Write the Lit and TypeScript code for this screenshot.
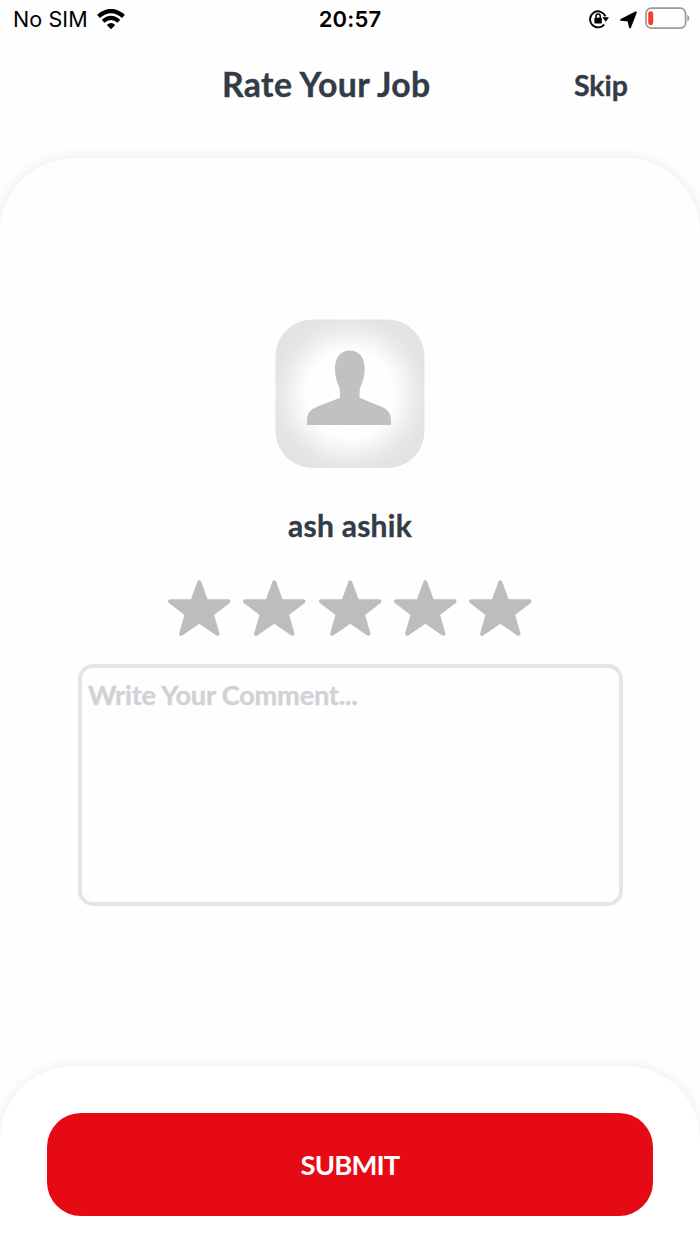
import { LitElement, html, css } from "lit";
import { customElement } from "lit/decorators.js";

@customElement("status-bar")
class StatusBar extends LitElement {
  static styles = css`
    :host { display: block; height: 40px; }
    .bar { display: grid; grid-template-columns: 1fr auto 1fr; align-items: center; height: 39px; padding: 0 10px 0 13px; box-sizing: border-box; font-family: Inter, "Liberation Sans", sans-serif; color: #000; }
    .left, .right { display: flex; align-items: center; }
    .right { justify-content: flex-end; }
    .carrier { font-size: 21.5px; line-height: 39px; width: 75px; white-space: nowrap; font-weight: 400; letter-spacing: 0.1px; }
    .time { font-size: 22px; line-height: 39px; font-weight: 600; letter-spacing: 0.2px; margin-right: 3px; }
    .wifi { margin: 0 0 1px 9px; }
    .lock { margin-bottom: 1px; }
    .arrow { margin: 0 8px 0 11px; }
    .battery { margin-bottom: 2px; }
    svg { display: block; }
  `;
  render() {
    return html`<div class="bar">
      <div class="left">
        <span class="carrier">No SIM</span>
        <svg class="wifi" width="28" height="21" viewBox="0 0 28 21">
          <path d="M1.5 7.4Q14-3.4 26.5 7.4" fill="none" stroke="#000" stroke-width="4.2" />
          <path d="M6.1 12.2Q14 5.4 21.9 12.2" fill="none" stroke="#000" stroke-width="4" />
          <path d="M9.8 15.9Q14 12.3 18.2 15.9L14 20.2Z" />
        </svg>
      </div>
      <span class="time">20:57</span>
      <div class="right">
        <svg class="lock" width="20" height="20" viewBox="0 0 20 20">
          <path d="M15.2 15.5A8 8 0 1 1 16.5 7.4" fill="none" stroke="#000" stroke-width="1.9" />
          <path d="M13.2 8.2H20L16.8 12.8Z" />
          <rect x="5.4" y="8.8" width="7.4" height="5.6" rx=".7" />
          <path d="M7 9V7.2a2.1 2.1 0 0 1 4.2 0V9" fill="none" stroke="#000" stroke-width="1.5" />
        </svg>
        <svg class="arrow" width="17" height="18" viewBox="0 0 17 18">
          <path d="M1.2 8.8 15.8 1.3 10 16.4 8.5 9.6Z" stroke="#000" stroke-width="2" stroke-linejoin="round" />
        </svg>
        <svg class="battery" width="45" height="23" viewBox="0 0 45 23">
          <rect x="1" y="1.2" width="39.6" height="20" rx="5.3" fill="none" stroke="#999" stroke-width="1.7" />
          <rect x="3.2" y="4.2" width="5" height="14" rx="2.4" fill="#ff3b30" />
          <path d="M42.3 7.8q2 .7 2 3.4t-2 3.4Z" fill="#999" />
        </svg>
      </div>
    </div>`;
  }
}

@customElement("star-rating")
class StarRating extends LitElement {
  static styles = css`
    :host { display: block; }
    .row { display: flex; justify-content: center; gap: 12.2px; }
    svg { display: block; fill: #bdbdbd; stroke: #bdbdbd; stroke-width: 4; stroke-linejoin: round; }
  `;
  render() {
    return html`<div class="row">${[1, 2, 3, 4, 5].map(
      () => html`<svg width="63" height="57" viewBox="0 0 63 57">
        <path d="M31.3 2.4 38.2 21.3H60.5L43.8 34.1 49.5 53.8 31.3 41.4 13.1 53.8 18.8 34.1 2.1 21.3H24.4Z" />
      </svg>`
    )}</div>`;
  }
}

@customElement("app-root")
class AppRoot extends LitElement {
  static styles = css`
    :host { display: block; }
    * { box-sizing: border-box; }
    .screen { width: 700px; height: 1244px; overflow: hidden; display: flex; flex-direction: column; background: #fefefe; font-family: Lato, "Open Sans", sans-serif; font-weight: 700; color: #323b46; }
    .header { display: grid; grid-template-columns: 1fr 208px 1fr; height: 118px; flex: none; align-items: start; padding-right: 48px; }
    .title { font-size: 33.8px; line-height: 44px; margin: 22px 0 0; font-weight: 700; white-space: nowrap; grid-column: 2; letter-spacing: 0.36px; }
    .title, .skip, .name { -webkit-text-stroke: 0.35px currentColor; }
    .skip { font-size: 28.5px; line-height: 40px; margin: 25px 24px 0 0; justify-self: end; border: 0; padding: 0; background: none; font-family: inherit; font-weight: 700; color: inherit; }
    .content { flex: none; height: 1086px; background: #fefefe; border-radius: 74px 74px 0 0; box-shadow: 0 0 14px rgba(0, 0, 0, 0.085); display: flex; flex-direction: column; align-items: center; padding-top: 161px; }
    .avatar { display: block; flex: none; }
    .name { font-size: 30px; line-height: 40px; height: 40px; margin: 36px 0 0; white-space: nowrap; letter-spacing: 0.25px; }
    .stars { margin-top: 35px; }
    .comment { display: block; flex: none; width: 545px; height: 242px; margin: 27px 0 0 1px; border: 4px solid #e5e5e5; border-radius: 15px; background: #fefefe; resize: none; padding: 9px 6px; font: 700 27.2px/36px Lato, sans-serif; letter-spacing: -0.22px; outline: none; }
    .comment::placeholder { color: #d1d1d6; opacity: 1; -webkit-text-stroke: 0.35px #d1d1d6; }
    .footer { flex: none; height: 178px; margin-top: auto; background: #fff; border-radius: 74px 74px 0 0; box-shadow: 0 0 14px rgba(0, 0, 0, 0.075); padding: 47px 47px 0; width: 700px; }
    .submit { display: block; width: 606px; height: 103px; border: 0; border-radius: 34px; background: #e60a14; color: #fff; font: 700 27.4px/40px Lato, sans-serif; letter-spacing: -0.8px; padding: 0; }
  `;
  render() {
    return html`<main class="screen">
      <status-bar></status-bar>
      <header class="header">
        <h1 class="title">Rate Your Job</h1>
        <button class="skip">Skip</button>
      </header>
      <section class="content">
        <svg class="avatar" width="150" height="150" viewBox="0 0 150 150">
          <defs>
            <radialGradient id="glow" cx="75" cy="75" r="80" gradientUnits="userSpaceOnUse">
              <stop offset="0" stop-color="#fff" />
              <stop offset=".54" stop-color="#fefefe" />
              <stop offset=".68" stop-color="#f5f5f5" />
              <stop offset=".86" stop-color="#e8e8e8" />
              <stop offset="1" stop-color="#e3e3e3" />
            </radialGradient>
          </defs>
          <rect x=".5" y=".5" width="149" height="148.5" rx="37" fill="url(#glow)" />
          <path fill="#c1c1c1" d="M74.7 31.5C84.5 31.5 90 39.5 89.7 50 89.6 59 88 61 85.2 69 84.6 71 84.5 74 84.5 78.8L106.5 87.8Q116 91.5 116 101V106H32V101Q32 91.5 42 87.8L65 78.8C65 74 65 71 64.4 69 61.5 61 60.2 59 60 50 59.8 39.5 65 31.5 74.7 31.5Z" />
        </svg>
        <div class="name">ash ashik</div>
        <star-rating class="stars"></star-rating>
        <textarea class="comment" placeholder="Write Your Comment..."></textarea>
        <footer class="footer"><button class="submit">SUBMIT</button></footer>
      </section>
    </main>`;
  }
}
